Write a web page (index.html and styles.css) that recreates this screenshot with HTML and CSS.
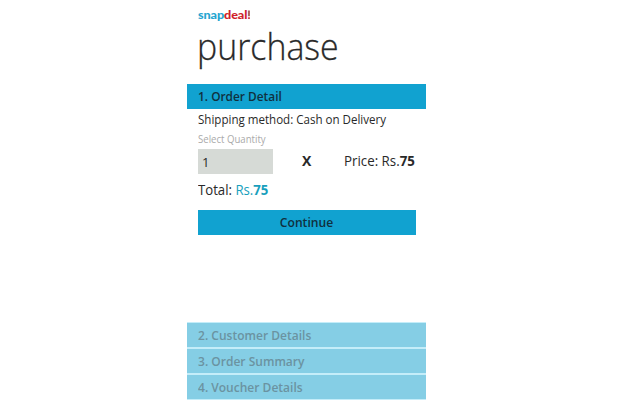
FILE: index.html
```html
<!DOCTYPE html>
<html lang="en">
<head>
<meta charset="utf-8">
<title>Purchase</title>
<link rel="stylesheet" href="styles.css">
</head>
<body>
<main class="phone">
  <div class="brand"><span class="brand-snap">snap</span><span class="brand-deal">deal</span><svg class="brand-mark" viewBox="0 0 3 10" width="3" height="10"><path d="M0.3 0.5H2.2V6.3H0.3Z" fill="#a8655c"/><path d="M0.3 7.3H2.2V9H0.3Z" fill="#d4474a"/></svg></div>
  <h1 class="title"><span class="t">purchase</span></h1>
  <h2 class="bar"><span class="t">1. Order Detail</span></h2>
  <section class="detail">
    <p class="shipping"><span class="t">Shipping method: Cash on Delivery</span></p>
    <p class="label"><span class="t">Select Quantity</span></p>
    <div class="row">
      <div class="qty">1</div>
      <b class="times">X</b>
      <span class="price"><span class="t">Price: Rs.<b>75</b></span></span>
    </div>
    <p class="total"><span class="t">Total: <span class="amount">Rs.<b>75</b></span></span></p>
    <button class="continue"><span class="t">Continue</span></button>
  </section>
  <nav class="steps">
    <div class="step"><span class="t">2. Customer Details</span></div>
    <div class="step"><span class="t">3. Order Summary</span></div>
    <div class="step"><span class="t">4. Voucher Details</span></div>
  </nav>
</main>
</body>
</html>
```
FILE: styles.css
```css
* { box-sizing: border-box; }
body { margin: 0; background: #fff; font-family: "Open Sans", "Noto Sans", sans-serif; color: #292929; }
.phone { width: 239px; height: 400px; margin-left: 187px; display: flex; flex-direction: column; overflow: hidden; }
.t { display: inline-block; white-space: nowrap; transform-origin: left center; }
.brand { display: flex; align-items: center; height: 12px; margin: 9px 0 0 11px; font: 900 11.5px/12px Lato, sans-serif; letter-spacing: -0.1px; transform: scaleX(1.1); transform-origin: left center; }
.brand-snap { color: #25a5d0; }
.brand-deal { color: #d01f2b; }
.brand-mark { margin-top: -1px; }
.title { margin: 0 0 0 10px; height: 63px; font-size: 37px; font-weight: 300; line-height: 50px; }
.title .t { transform: scaleX(0.915); -webkit-text-stroke: 0.3px #292929; }
.bar { margin: 0; height: 25px; padding-left: 11px; background: #11a2d0; color: #10303e; font-size: 12.5px; font-weight: 600; line-height: 25px; }
.bar .t { transform: scaleX(0.95); }
.detail { padding: 0 10px 0 11px; height: 214px; }
.detail p { margin: 0; }
.shipping { font-size: 12px; line-height: 21px; }
.shipping .t { transform: scaleX(0.963); }
.label { font-size: 10px; line-height: 19px; color: #aaa; }
.label .t { transform: scaleX(0.96); }
.row { display: flex; height: 25px; line-height: 24px; font-size: 14px; }
.row > * { flex-shrink: 0; }
.qty { width: 75px; padding-left: 4px; background: #d6dad6; font-size: 13px; line-height: 26px; }
.times { margin-left: 29px; width: 42px; }
.price .t { transform: scaleX(0.95); }
.total { height: 36px; font-size: 14px; line-height: 32px; }
.total .t { transform: scaleX(0.94); }
.amount { color: #189fbd; }
.continue { display: block; width: 218px; height: 25px; padding: 0; border: 0; background: #11a2d0; color: #10303e; font: 600 12.5px/25px "Open Sans", sans-serif; }
.continue .t { transform: scaleX(0.97); transform-origin: center; }
.steps { display: grid; gap: 2px; padding: 1px 0; background: #c4edf9; }
.step { height: 24px; padding-left: 11px; background: #85cee5; color: #6b93a1; font-size: 13px; font-weight: 600; line-height: 24px; }
.step .t { transform: scaleX(0.925); }
```
